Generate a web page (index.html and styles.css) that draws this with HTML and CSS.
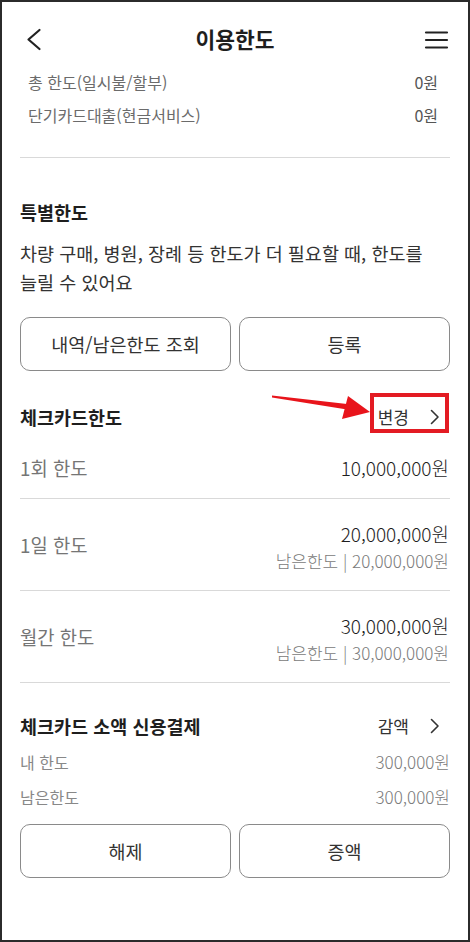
FILE: index.html
```html
<!DOCTYPE html>
<html lang="ko">
<head>
<meta charset="utf-8">
<title>이용한도</title>
<link rel="stylesheet" href="styles.css">
</head>
<body>
<div class="frame">
  <header class="topbar">
    <svg class="icon-back" width="24" height="24" viewBox="0 0 24 24"><path d="M19.5 3 L8.5 12.5 L19.5 22" fill="none" stroke="#222" stroke-width="2.2" stroke-linecap="round" stroke-linejoin="round"/></svg>
    <h1 class="title">이용한도</h1>
    <svg class="icon-menu" width="26" height="24" viewBox="0 0 26 24"><path d="M2 5.5 H23 M2 13 H23 M2 20.5 H23" fill="none" stroke="#222" stroke-width="2.2" stroke-linecap="round"/></svg>
  </header>

  <section class="summary">
    <div class="srow"><span class="slbl">총 한도(일시불/할부)</span><span class="sval">0원</span></div>
    <div class="srow"><span class="slbl">단기카드대출(현금서비스)</span><span class="sval">0원</span></div>
  </section>

  <main class="content">
    <div class="divider"></div>

    <h2 class="sec-title special-title">특별한도</h2>
    <p class="desc">차량 구매, 병원, 장례 등 한도가 더 필요할 때, 한도를 늘릴 수 있어요</p>
    <div class="btns">
      <button class="btn">내역/남은한도 조회</button>
      <button class="btn">등록</button>
    </div>

    <div class="sec-head check-head">
      <h2 class="sec-title">체크카드한도</h2>
      <a class="link marked">변경<svg class="chev" width="10" height="16" viewBox="0 0 10 16"><path d="M1.5 1.5 L8 8 L1.5 14.5" fill="none" stroke="#333" stroke-width="1.6" stroke-linecap="round" stroke-linejoin="round"/></svg></a>
    </div>

    <div class="lrow single">
      <span class="lbl">1회 한도</span>
      <span class="val">10,000,000원</span>
    </div>
    <div class="lrow double">
      <span class="lbl">1일 한도</span>
      <div class="vals">
        <div class="val">20,000,000원</div>
        <div class="sub">남은한도 | 20,000,000원</div>
      </div>
    </div>
    <div class="lrow double">
      <span class="lbl">월간 한도</span>
      <div class="vals">
        <div class="val">30,000,000원</div>
        <div class="sub">남은한도 | 30,000,000원</div>
      </div>
    </div>

    <div class="sec-head small-head">
      <h2 class="sec-title">체크카드 소액 신용결제</h2>
      <a class="link">감액<svg class="chev" width="10" height="16" viewBox="0 0 10 16"><path d="M1.5 1.5 L8 8 L1.5 14.5" fill="none" stroke="#333" stroke-width="1.6" stroke-linecap="round" stroke-linejoin="round"/></svg></a>
    </div>
    <div class="mini-rows">
      <div class="mrow"><span>내 한도</span><span class="mval">300,000원</span></div>
      <div class="mrow"><span>남은한도</span><span class="mval">300,000원</span></div>
    </div>
    <div class="btns bottom-btns">
      <button class="btn">해제</button>
      <button class="btn">증액</button>
    </div>
  </main>

  <svg class="annot-arrow" width="110" height="44" viewBox="0 0 110 44">
    <polygon points="6,9.5 6,11.5 81,23.5 81,18" fill="#e8141b"/>
    <polygon points="82,10 104,26 76,33" fill="#e8141b"/>
  </svg>
</div>
</body>
</html>
```

FILE: styles.css
```css
* { box-sizing: border-box; }

html, body {
  margin: 0;
  padding: 0;
  background: #fff;
}

body {
  font-family: "Noto Sans CJK KR", "Noto Sans", sans-serif;
  color: #222;
}

.frame {
  position: relative;
  width: 470px;
  height: 942px;
  border: 2px solid #2b2b2b;
  overflow: hidden;
  background: #fff;
}

/* header */
.topbar {
  display: grid;
  grid-template-columns: 40px 1fr 40px;
  align-items: center;
  height: 58px;
  padding: 16px 18px 0;
}
.icon-back { display: block; }
.icon-menu { display: block; justify-self: end; }
.title {
  margin: 0;
  text-align: center;
  font-size: 21.5px;
  line-height: 42px;
  font-weight: 700;
  color: #1e1e1e;
}

/* summary rows */
.summary {
  padding: 5px 30px 0 26px;
  margin-bottom: 26px;
}
.srow {
  display: flex;
  justify-content: space-between;
  align-items: center;
  height: 33px;
  font-size: 16px;
}
.slbl { color: #6b6b6b; }
.sval { color: #555; }

/* content */
.content {
  padding: 0 18px;
}
.divider {
  height: 1px;
  background: #d9d9d9;
}

.sec-title {
  margin: 0;
  font-size: 18.5px;
  line-height: 26px;
  font-weight: 700;
  color: #1e1e1e;
}
.special-title {
  margin-top: 41px;
}
.desc {
  margin: 13.5px 0 0;
  font-size: 18.5px;
  line-height: 29px;
  color: #333;
  word-break: keep-all;
}

.btns {
  display: grid;
  grid-template-columns: 1fr 1fr;
  gap: 8px;
  margin-top: 20.5px;
}
.btn {
  height: 54px;
  border: 1px solid #8a8a8a;
  border-radius: 10px;
  background: #fff;
  font-family: inherit;
  font-size: 18.5px;
  color: #333;
  padding: 0;
}

.sec-head {
  display: flex;
  justify-content: space-between;
  align-items: center;
}
.check-head {
  margin-top: 25.5px;
  height: 40px;
}
.link {
  position: relative;
  display: inline-flex;
  align-items: center;
  height: 24px;
  margin-right: 10px;
  font-size: 17px;
  color: #333;
  text-decoration: none;
}
.chev {
  display: block;
  margin-left: 21px;
}
.marked::after {
  content: "";
  position: absolute;
  left: -8px;
  right: -9px;
  top: -11.5px;
  bottom: -4.5px;
  border: 4px solid #e31b23;
}

.lrow {
  display: flex;
  justify-content: space-between;
  align-items: center;
  border-bottom: 1px solid #d9d9d9;
}
.single { height: 62px; }
.double { height: 92px; }
.lbl {
  font-size: 18.8px;
  color: #757575;
}
.val {
  font-size: 19px;
  line-height: 27px;
  font-weight: 300;
  color: #1e1e1e;
  padding-right: 1px;
}
.vals {
  margin-top: 6px;
  text-align: right;
}
.sub {
  font-size: 17px;
  line-height: 27px;
  font-weight: 300;
  color: #7a7a7a;
  padding-right: 1px;
}

.small-head {
  margin-top: 28px;
  height: 30px;
}
.mini-rows {
  margin-top: 3.5px;
}
.mrow {
  display: flex;
  justify-content: space-between;
  align-items: center;
  height: 35px;
  font-size: 16px;
  color: #888;
}
.mval {
  font-size: 17px;
  font-weight: 300;
  color: #7a7a7a;
}
.bottom-btns {
  margin-top: 10px;
}

/* annotation overlay */
.annot-arrow {
  position: absolute;
  left: 264px;
  top: 384px;
}
```
